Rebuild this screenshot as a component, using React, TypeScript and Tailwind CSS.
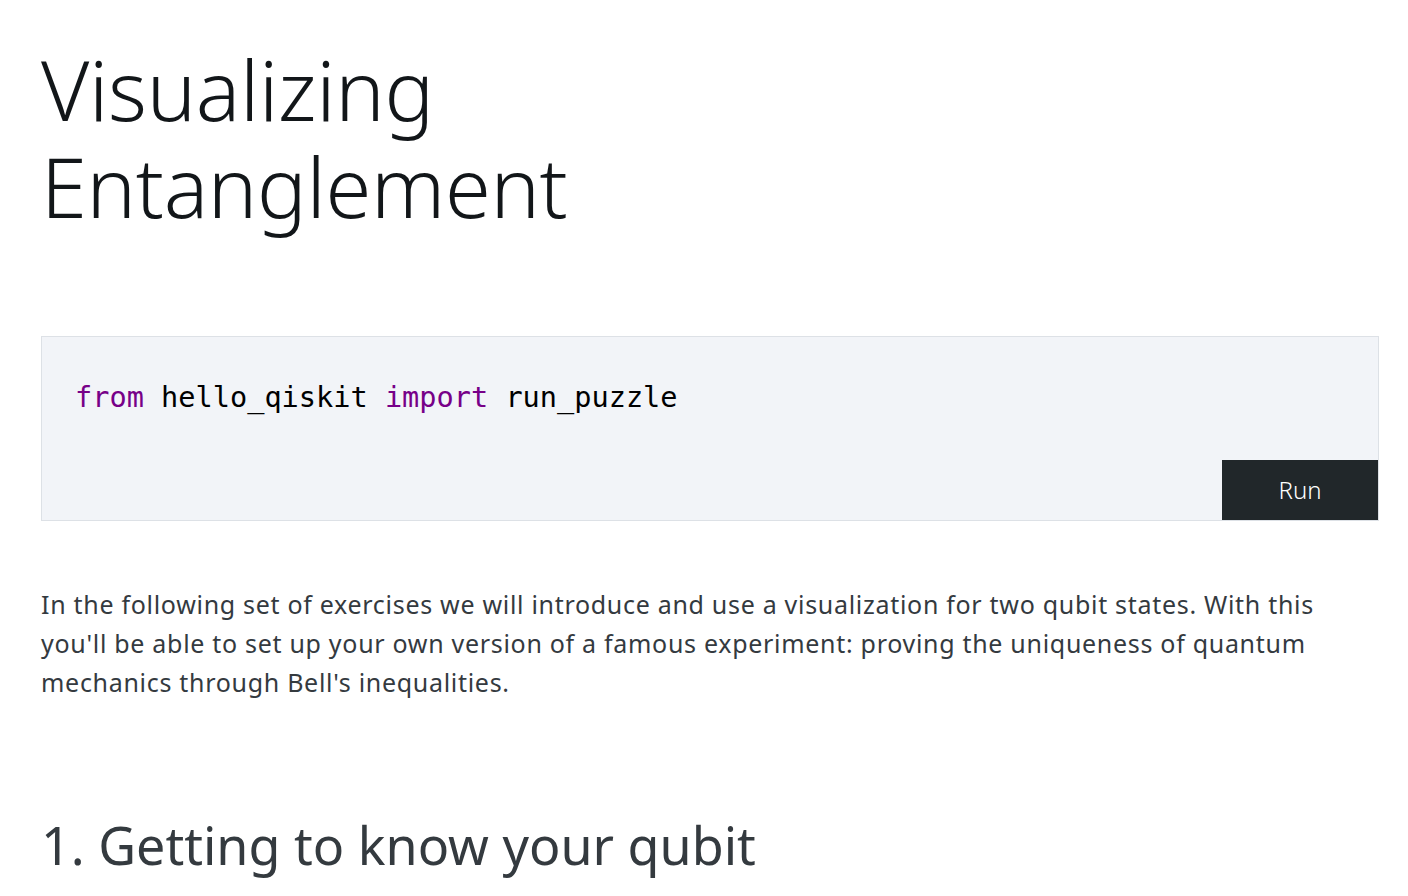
import React from "react";

const sans = { fontFamily: '"Noto Sans", "Open Sans", sans-serif' };

export default function App() {
  return (
    <div className="h-[896px] overflow-hidden bg-white pl-[41px] pr-[29px]" style={sans}>
      <h1 className="pt-[40px] text-[83px] font-light leading-[97px] tracking-[-0.3px] text-[#121619]">
        Visualizing
        <br />
        Entanglement
      </h1>

      <div className="mt-[102px] flex flex-col border border-[#dde1e6] bg-[#f2f4f8]">
        <pre className="px-[33px] pt-[40px] text-[28.6px] leading-[40px] text-black font-['DejaVu_Sans_Mono',monospace]">
          <span className="text-[#770088]">from</span> hello_qiskit{" "}
          <span className="text-[#770088]">import</span> run_puzzle
        </pre>
        <div className="mt-[43px] flex justify-end">
          <button className="h-[60px] w-[156px] bg-[#21272a] text-[24px] font-light text-white">
            Run
          </button>
        </div>
      </div>

      <p className="mt-[64px] text-[25px] leading-[39px] tracking-[0.7px] text-[#343a3f]">
        In the following set of exercises we will introduce and use a visualization for two qubit states. With this
        <br />
        you'll be able to set up your own version of a famous experiment: proving the uniqueness of quantum
        <br />
        mechanics through Bell's inequalities.
      </p>

      <h2 className="mt-[110px] text-[52px] font-normal leading-[66px] text-[#343a3f]">
        1. Getting to know your qubit
      </h2>
    </div>
  );
}
